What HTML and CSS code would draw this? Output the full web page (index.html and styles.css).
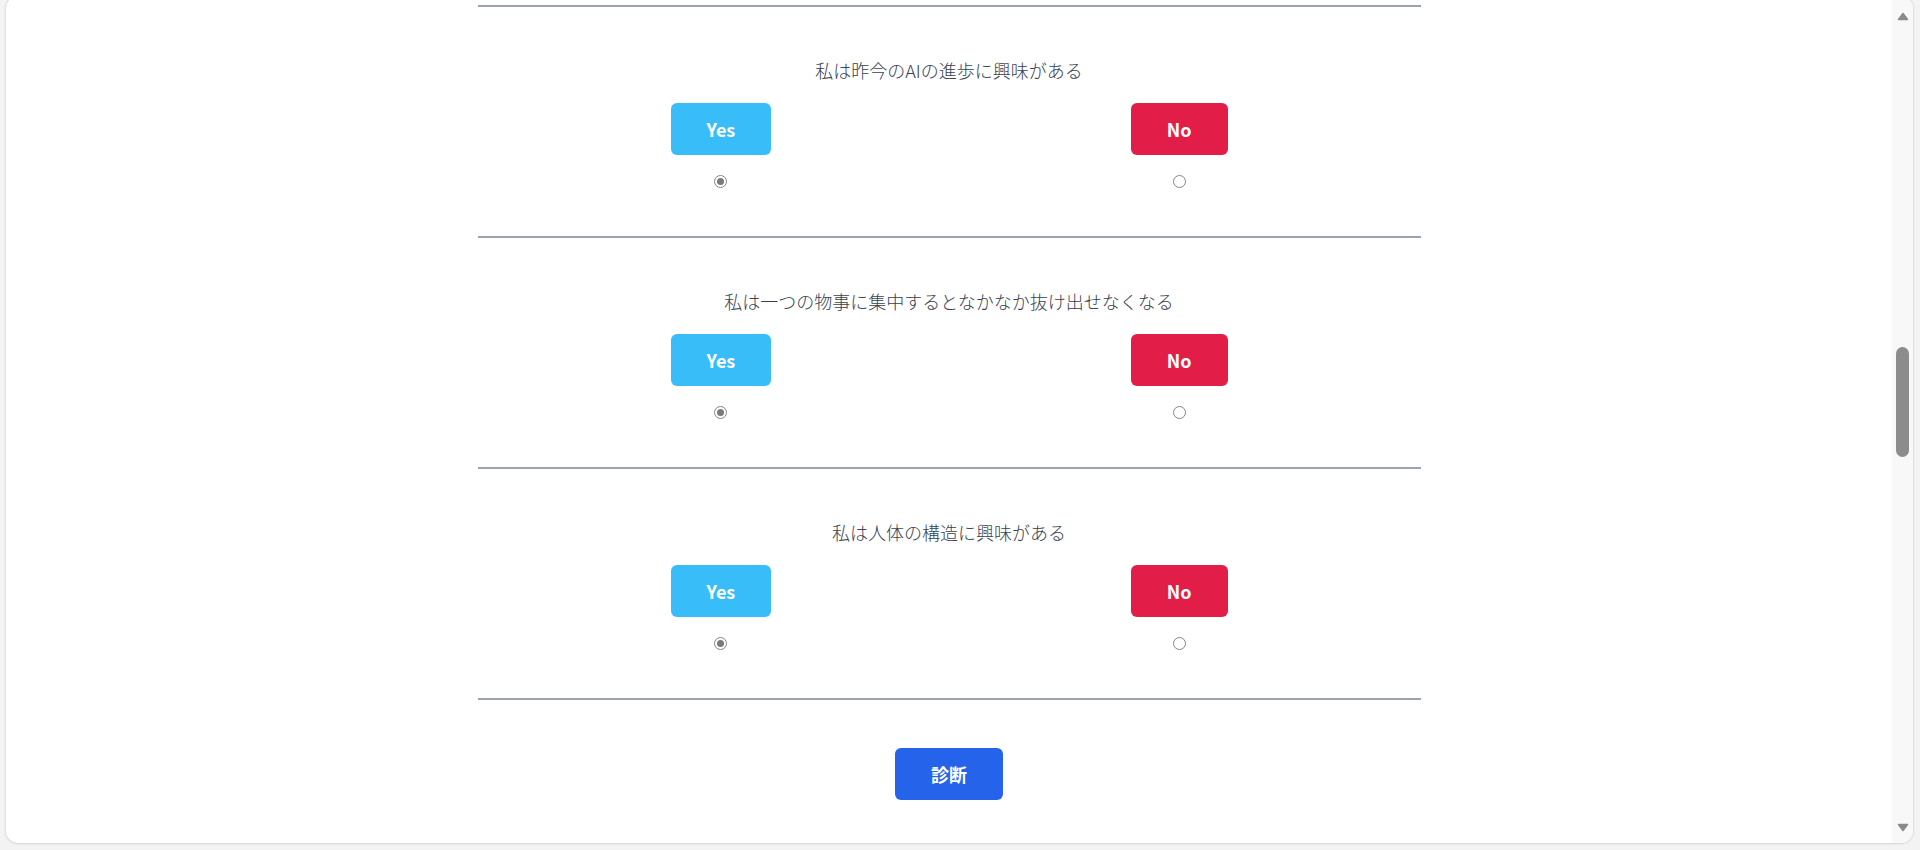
FILE: index.html
```html
<!DOCTYPE html>
<html lang="ja">
<head>
<meta charset="utf-8">
<title>診断</title>
<link rel="stylesheet" href="styles.css">
</head>
<body>
<div class="card">
  <main class="content">
    <div class="form">
      <section class="q">
        <p class="q-text">私は昨今のAIの進歩に興味がある</p>
        <div class="choices">
          <div class="choice">
            <button class="btn btn-yes">Yes</button>
            <span class="radio checked"></span>
          </div>
          <div class="choice">
            <button class="btn btn-no">No</button>
            <span class="radio"></span>
          </div>
        </div>
      </section>
      <section class="q">
        <p class="q-text">私は一つの物事に集中するとなかなか抜け出せなくなる</p>
        <div class="choices">
          <div class="choice">
            <button class="btn btn-yes">Yes</button>
            <span class="radio checked"></span>
          </div>
          <div class="choice">
            <button class="btn btn-no">No</button>
            <span class="radio"></span>
          </div>
        </div>
      </section>
      <section class="q">
        <p class="q-text">私は人体の構造に興味がある</p>
        <div class="choices">
          <div class="choice">
            <button class="btn btn-yes">Yes</button>
            <span class="radio checked"></span>
          </div>
          <div class="choice">
            <button class="btn btn-no">No</button>
            <span class="radio"></span>
          </div>
        </div>
      </section>
      <div class="end">
        <button class="btn btn-submit">診断</button>
      </div>
    </div>
  </main>
  <div class="scrollbar">
    <div class="sb-btn sb-up">
      <svg width="12" height="9" viewBox="0 0 12 9"><path d="M6 1.5 L10.5 7.5 L1.5 7.5 Z" fill="#8a8a8a" stroke="#8a8a8a" stroke-width="1.5" stroke-linejoin="round"/></svg>
    </div>
    <div class="sb-track"><div class="sb-thumb"></div></div>
    <div class="sb-btn sb-down">
      <svg width="12" height="9" viewBox="0 0 12 9"><path d="M6 7.5 L10.5 1.5 L1.5 1.5 Z" fill="#8a8a8a" stroke="#8a8a8a" stroke-width="1.5" stroke-linejoin="round"/></svg>
    </div>
  </div>
</div>
</body>
</html>
```

FILE: styles.css
```css
html, body {
  margin: 0;
  padding: 0;
  height: 850px;
  overflow: hidden;
  background: #f3f3f3;
  font-family: "Noto Sans CJK JP", "Noto Sans", sans-serif;
}

.card {
  display: flex;
  box-sizing: border-box;
  margin: -4px 0 0 6px;
  width: 1907px;
  height: 847px;
  background: #ffffff;
  border-radius: 12px;
  box-shadow: 0 0 2px rgba(0, 0, 0, 0.18), 0 1px 3px rgba(0, 0, 0, 0.08);
  overflow: hidden;
}

.content {
  flex: 1;
  display: flex;
  justify-content: center;
  padding-top: 9px;
}

.form {
  width: 943px;
  display: flex;
  flex-direction: column;
}

.q {
  display: flex;
  flex-direction: column;
  align-items: center;
  border-top: 2px solid #9ca3af;
  padding: 51px 0 48px;
}

.q-text {
  margin: 0;
  font-size: 18px;
  line-height: 24px;
  font-weight: 300;
  color: #374151;
}

.choices {
  box-sizing: border-box;
  width: 100%;
  margin-top: 21px;
  padding: 0 193px;
  display: flex;
  justify-content: space-between;
}

.choice {
  display: flex;
  flex-direction: column;
  align-items: center;
}

.btn {
  border: none;
  border-radius: 6px;
  height: 52px;
  padding: 0 36px;
  font-family: "Noto Sans CJK JP", "Noto Sans", sans-serif;
  font-size: 18px;
  line-height: 24px;
  font-weight: 700;
  color: #ffffff;
  cursor: pointer;
}

.btn-yes { background: #38bdf8; }
.btn-no { background: #e11d48; }
.btn-submit { background: #2563eb; }

.radio {
  box-sizing: border-box;
  margin-top: 20px;
  width: 13px;
  height: 13px;
  border: 1px solid #858585;
  border-radius: 50%;
  background: #fff;
  display: flex;
  align-items: center;
  justify-content: center;
}

.radio.checked::after {
  content: "";
  width: 7px;
  height: 7px;
  border-radius: 50%;
  background: #7a7a7a;
}

.end {
  border-top: 2px solid #9ca3af;
  padding-top: 48px;
  display: flex;
  justify-content: center;
}

.scrollbar {
  width: 21px;
  flex: none;
  display: flex;
  flex-direction: column;
  background: #f8f8f8;
}

.sb-btn {
  display: flex;
  align-items: center;
  justify-content: center;
  flex: none;
}

.sb-up { height: 40px; }
.sb-down { height: 32px; }

.sb-track {
  flex: 1;
  display: flex;
  justify-content: center;
}

.sb-thumb {
  margin-top: 311px;
  width: 13px;
  height: 110px;
  border-radius: 7px;
  background: #8c8c8c;
}
```
